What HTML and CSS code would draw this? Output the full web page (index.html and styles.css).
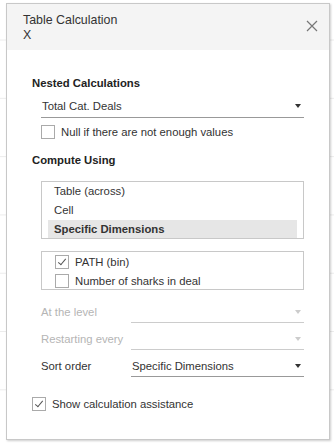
FILE: index.html
```html
<!DOCTYPE html>
<html lang="en">
<head>
    <meta charset="UTF-8">
    <meta name="viewport" content="width=device-width, initial-scale=1.0">
    <title>Table Calculation</title>
    <link rel="stylesheet" href="styles.css">
</head>
<body>
    <div class="dialog">
        <div class="header">
            <div class="title">Table Calculation<br>X</div>
            <svg class="close" width="12" height="12" viewBox="0 0 12 12">
                <path d="M1 1 L11 11 M11 1 L1 11" stroke="#777" stroke-width="1.2" fill="none"/>
            </svg>
        </div>

        <div class="content">
            <div class="section-title">Nested Calculations</div>
            <div class="select nested">
                <span>Total Cat. Deals</span>
                <span class="arrow"></span>
            </div>
            <label class="check null-check">
                <span class="box"></span>
                Null if there are not enough values
            </label>

            <div class="section-title">Compute Using</div>
            <div class="listbox">
                <div class="item">Table (across)</div>
                <div class="item">Cell</div>
                <div class="item selected">Specific Dimensions</div>
            </div>

            <div class="dimbox">
                <label class="check">
                    <span class="box checked"></span>
                    PATH (bin)
                </label>
                <label class="check">
                    <span class="box"></span>
                    Number of sharks in deal
                </label>
            </div>

            <div class="row first disabled">
                <span class="label">At the level</span>
                <div class="select"><span></span><span class="arrow"></span></div>
            </div>
            <div class="row disabled">
                <span class="label">Restarting every</span>
                <div class="select"><span></span><span class="arrow"></span></div>
            </div>
            <div class="row">
                <span class="label">Sort order</span>
                <div class="select"><span>Specific Dimensions</span><span class="arrow"></span></div>
            </div>

            <label class="check assist">
                <span class="box checked"></span>
                Show calculation assistance
            </label>
        </div>
    </div>
</body>
</html>
```

FILE: styles.css
```css
html, body {
    margin: 0;
    font-family: "Liberation Sans", Arial, sans-serif;
    color: #333;
}
body {
    height: 444px;
    padding: 3px 4px 0 6px;
    box-sizing: border-box;
    background: repeating-linear-gradient(to bottom, #fff 0, #fff 39px, #ececec 39px, #ececec 40px) 0 1px;
    background-size: 100% 58.3px;
}
.dialog {
    width: 324px;
    height: 437px;
    box-sizing: border-box;
    background: #fff;
    border: 1px solid #c8c8c8;
    box-shadow: 1px 1px 2px rgba(0, 0, 0, 0.2);
}
.header {
    display: flex;
    justify-content: space-between;
    align-items: flex-start;
    height: 46px;
    box-sizing: border-box;
    padding: 9px 11px 0 16px;
    background: #f4f4f4;
}
.title {
    font-size: 12.4px;
    line-height: 15px;
    color: #333;
}
.close {
    margin-top: 7px;
}
.content {
    padding: 26px 25px 0 25px;
    font-size: 11.3px;
}
.section-title {
    font-weight: bold;
    line-height: 14px;
    color: #222;
}
.select {
    flex: 1;
    display: flex;
    justify-content: space-between;
    align-items: center;
    height: 22px;
    box-sizing: border-box;
    border-bottom: 1px solid #999;
    padding: 0 1px;
}
.nested {
    margin: 5px 0 0 9px;
    height: 23px;
}
.arrow {
    width: 0;
    height: 0;
    border-left: 3px solid transparent;
    border-right: 3px solid transparent;
    border-top: 4px solid #333;
    margin-right: 2px;
}
.check {
    display: flex;
    align-items: center;
    gap: 6px;
    height: 19px;
}
.box {
    width: 12px;
    height: 12px;
    border: 1px solid #aaa;
    background: #fff;
    position: relative;
}
.box.checked:after {
    content: "";
    position: absolute;
    left: 4px;
    top: 1px;
    width: 3px;
    height: 7px;
    border: solid #555;
    border-width: 0 1.3px 1.3px 0;
    transform: rotate(40deg);
}
.null-check {
    margin: 4px 0 12px 9px;
}
.listbox {
    margin: 14px 0 0 9px;
    border: 1px solid #c8c8c8;
    height: 58px;
    box-sizing: border-box;
    padding: 0 6px;
    overflow: hidden;
}
.item {
    height: 19px;
    line-height: 19px;
    padding-left: 6px;
}
.item.selected {
    background: #e6e6e6;
    font-weight: bold;
    color: #333;
}
.dimbox {
    margin: 12px 0 0 9px;
    border: 1px solid #c8c8c8;
    height: 39px;
    box-sizing: border-box;
    padding: 0 13px;
}
.row {
    display: flex;
    align-items: flex-end;
    margin-left: 9px;
    height: 27px;
}
.row.first {
    margin-top: 6px;
}
.row .label {
    width: 90px;
    line-height: 22px;
}
.row.disabled {
    color: #b5b5b5;
}
.row.disabled .select {
    border-bottom-color: #ccc;
}
.row.disabled .arrow {
    border-top-color: #ccc;
}
.assist {
    margin-top: 17px;
}
```
